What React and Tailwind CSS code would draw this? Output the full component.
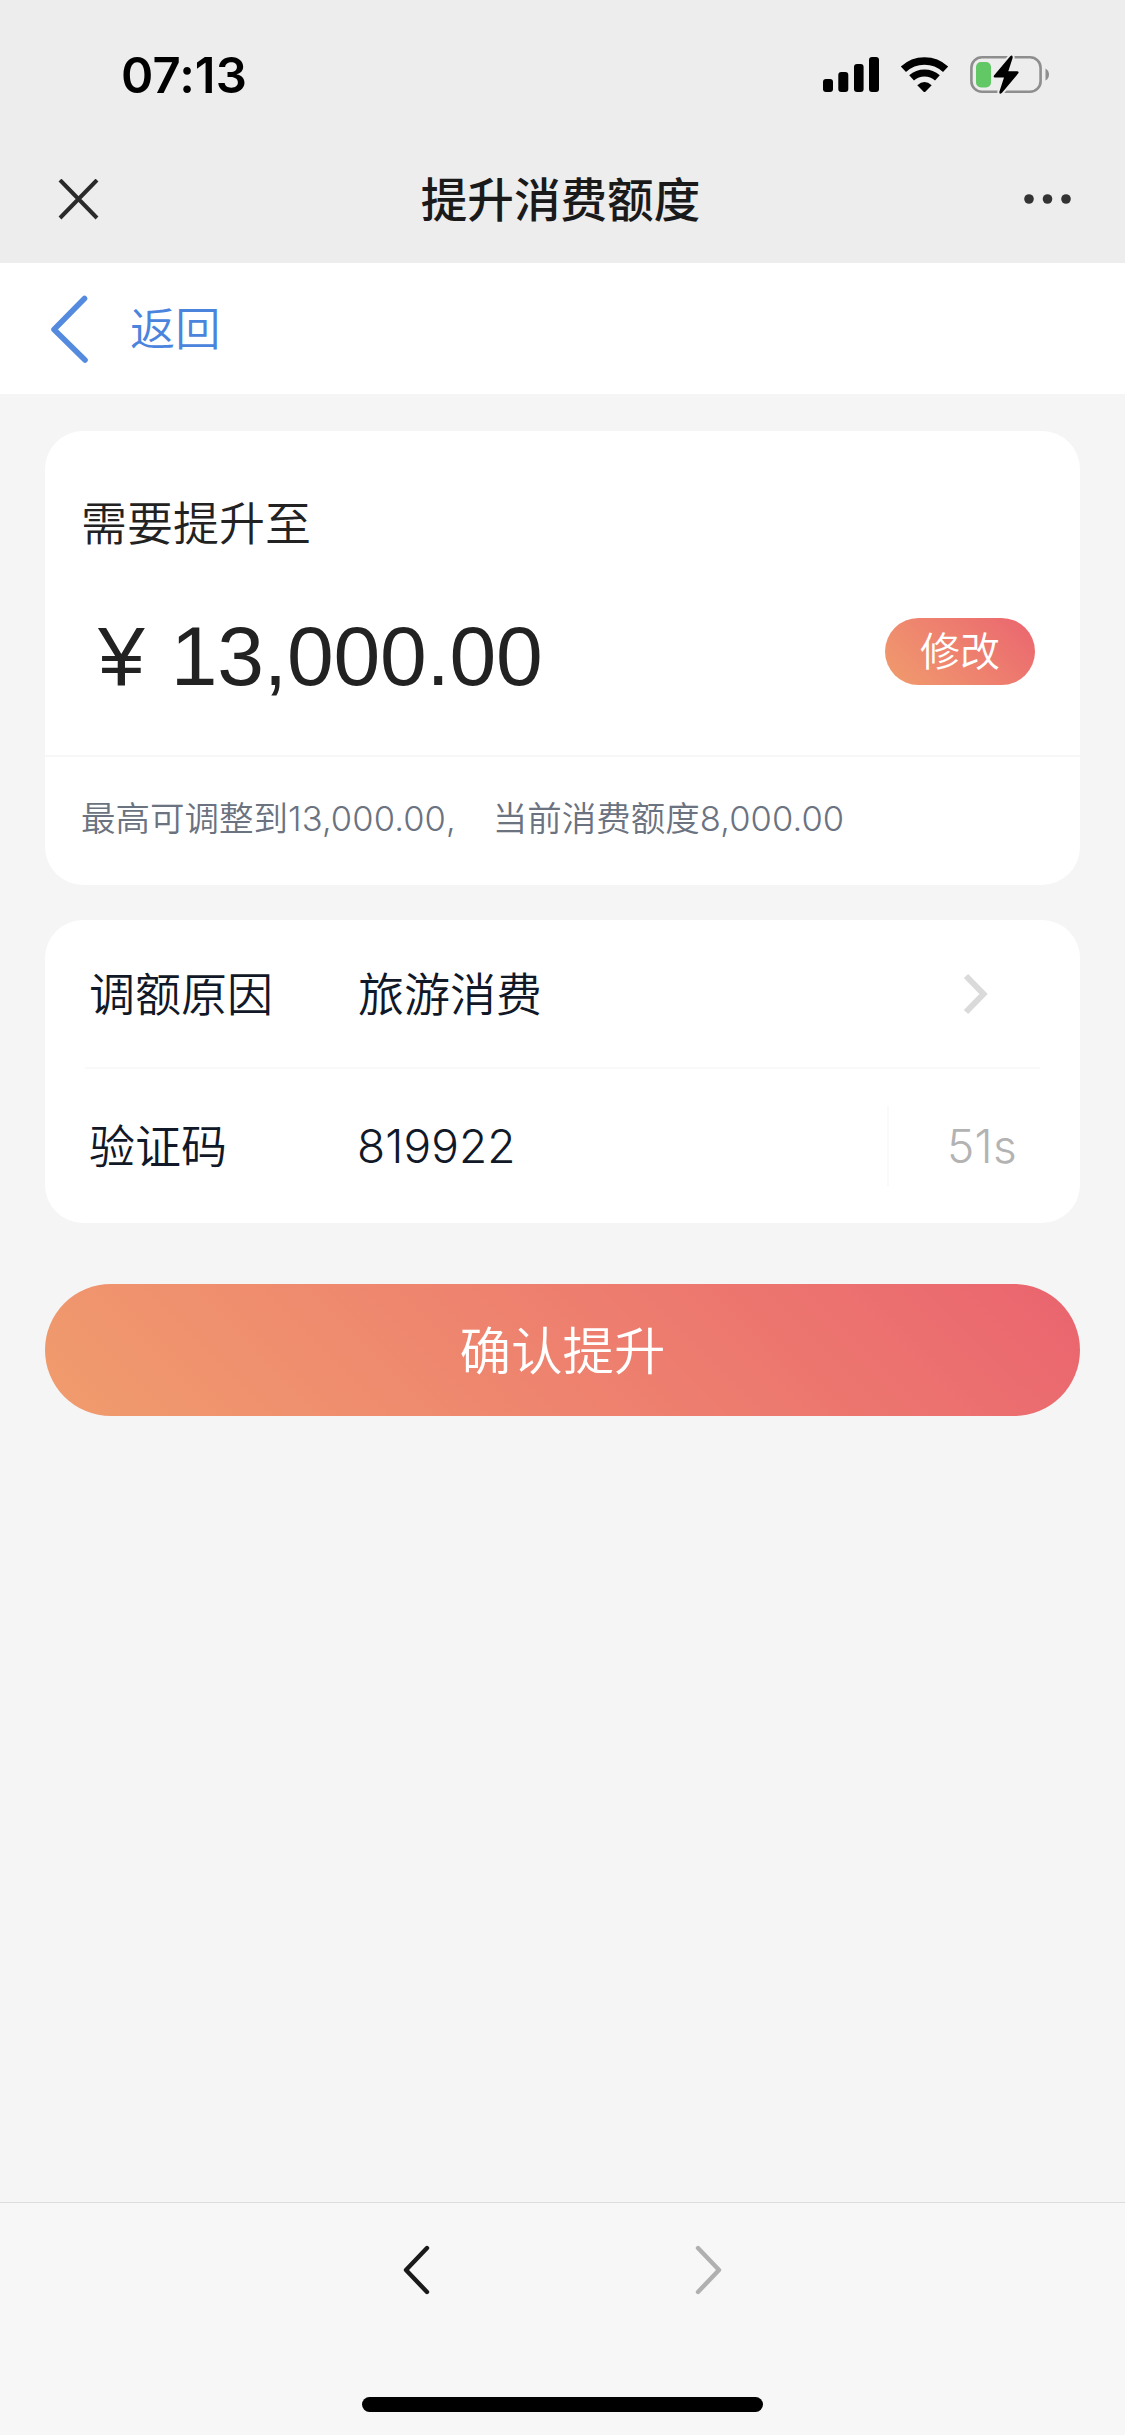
import React from "react";

// shared text styles: Latin digits from Inter, Chinese from Noto CJK
const cjk = "font-['Noto_Sans_CJK_SC',sans-serif]";
const mixed = "font-['Inter','Noto_Sans_CJK_SC',sans-serif]";

function StatusBar() {
  return (
    <div className="flex h-[136px] items-start justify-between pt-[48px] pl-[121px] pr-[74px]">
      <span className="font-['Inter',sans-serif] text-[49px] leading-[55px] font-semibold tracking-[0.1px] text-black">
        07:13
      </span>
      <div className="mt-[6px] flex gap-[20px]">
        {/* Signal */}
        <svg className="h-[41px] w-[58px]" viewBox="0 0 58 41">
          <rect x="1" y="25" width="10" height="13" rx="3" />
          <rect x="16.3" y="18" width="10" height="20" rx="3" />
          <rect x="32" y="10" width="9.6" height="28" rx="3" />
          <rect x="47" y="3" width="10" height="35" rx="3" />
        </svg>
        {/* Wifi */}
        <svg className="h-[41px] w-[50px]" viewBox="0 0 50 41">
          <path d="M3.4 15.3A31 31 0 0 1 45.6 15.3" fill="none" stroke="#000" strokeWidth="7.6" />
          <path d="M11.6 23.9A19.5 19.5 0 0 1 37.4 23.9" fill="none" stroke="#000" strokeWidth="7.2" />
          <path d="M17.3 31.2Q24.5 24.8 31.7 31.2L25.6 37.4Q24.5 38.4 23.4 37.4Z" />
        </svg>
        {/* Battery, charging */}
        <svg className="h-[41px] w-[81px]" viewBox="0 0 81 41">
          <rect x="1.4" y="3.3" width="69.2" height="34.4" rx="10.5" fill="none" stroke="#8e8e8e" strokeWidth="2.6" />
          <path d="M75.5 14.5Q79 16.5 79 20.5T75.5 26.5Z" fill="#8e8e8e" />
          <rect x="6" y="8" width="15" height="25.5" rx="5" fill="#62c765" />
          <path
            d="M40 2.5L24 21.5Q23 23.4 25 23.4H34L29.3 38Q29.3 41 32 38.7L48.3 19.3Q49.3 17.2 47 17.2H38.3L42.7 3.7Q42.7 0.2 40 2.5Z"
            stroke="#ededed"
            strokeWidth="4"
            paintOrder="stroke"
          />
        </svg>
      </div>
    </div>
  );
}

function TitleBar() {
  return (
    <div className="flex h-[126px] items-center justify-between pl-[58px] pr-[54px]">
      <svg className="h-[41px] w-[41px]" viewBox="0 0 41 41" fill="none" stroke="#2a2a2a" strokeWidth="4">
        <path d="M2 1L39 39M39 1L2 39" />
      </svg>
      <h1 className={`${cjk} pr-[2px] pb-[4px] text-[46.6px] font-medium text-[#1a1a1a]`}>提升消费额度</h1>
      <svg className="h-[10px] w-[47px]" viewBox="0 0 47 10" fill="#333">
        <circle cx="5" cy="5" r="4.8" />
        <circle cx="23.5" cy="5" r="4.8" />
        <circle cx="42" cy="5" r="4.8" />
      </svg>
    </div>
  );
}

export default function App() {
  return (
    <div className={`${mixed} flex h-[2435px] w-[1125px] flex-col bg-[#f5f5f5]`}>
      <header className="h-[263px] bg-[#ededed]">
        <StatusBar />
        <TitleBar />
      </header>

      {/* Back */}
      <div className="flex h-[131px] items-center bg-white pl-[50px]">
        <svg className="h-[68px] w-[40px]" viewBox="0 0 40 68" fill="none" stroke="#548bdf" strokeWidth="5.6" strokeLinecap="round" strokeLinejoin="round">
          <path d="M34.5 3.5L4 34.5L35 65" />
        </svg>
        <span className={`${cjk} ml-[40px] pb-[4px] text-[45.2px] font-[350] text-[#4a84dd]`}>返回</span>
      </div>

      <main className="flex-1 px-[45px] pt-[37px]">
        {/* Amount */}
        <section className="h-[454px] rounded-[38px] bg-white">
          <div className="h-[324px] pt-[55px] pl-[36px] pr-[45px]">
            <h2 className={`${cjk} text-[46px] leading-[68px] font-[350] text-[#222]`}>需要提升至</h2>
            <div className="mt-[57px] flex h-[90px] items-center justify-between">
              <div className="flex items-center pl-[17px] font-['Liberation_Sans',sans-serif] text-[84px] leading-[90px] text-[#222]">
                <span>¥</span>
                <span className="ml-[26px] tracking-[-0.2px]">13,000.00</span>
              </div>
              <button className={`${cjk} mb-[9px] h-[67px] w-[150px] rounded-full bg-linear-45 from-[#f09c6d] to-[#ea646f] pb-[6px] text-[40px] leading-[60px] font-[350] text-white`}>
                修改
              </button>
            </div>
          </div>
          <div className="flex h-[130px] items-center border-t-2 border-[#f7f7f7] pb-[4px] pl-[36px] text-[34.5px] font-[350] text-[#6b7280]">
            <span>
              最高可调整到<span className="tracking-[0.1px]">13,000.00</span>
            </span>
            <span>,</span>
            <span className="ml-[37px]">
              当前消费额度<span className="tracking-[0.1px]">8,000.00</span>
            </span>
          </div>
        </section>

        {/* Form */}
        <section className="mt-[35px] h-[303px] rounded-[38px] bg-white px-[40px] text-[46px] font-[350] text-[#111827]">
          <div className="flex h-[149px] items-center border-b-2 border-[#f9f9f9] pl-[4px]">
            <span className="w-[269px] pt-[2px]">调额原因</span>
            <span className="flex-1 pt-[2px]">旅游消费</span>
            <svg className="mr-[51px] h-[42px] w-[26px]" viewBox="0 0 26 42" fill="none" stroke="#dadada" strokeWidth="6">
              <path d="M3 3L20.5 21L3 39" />
            </svg>
          </div>
          <div className="flex h-[154px] items-center pl-[4px]">
            <span className="w-[268px] pt-[1px]">验证码</span>
            <span className="flex-1 tracking-[0.1px]">819922</span>
            <div className="flex h-[80px] w-[153px] items-center border-l-2 border-[#fafafa] pl-[58px] font-light tracking-[0.3px] text-[#b3b3b3]">
              51s
            </div>
          </div>
        </section>

        <button className={`${cjk} mt-[61px] h-[132px] w-full rounded-full bg-linear-45 from-[#f09c6d] to-[#ea646f] pb-[4px] text-[51.5px] font-[350] text-white`}>
          确认提升
        </button>
      </main>

      {/* Browser nav */}
      <footer className="flex h-[233px] flex-col items-center justify-between border-t border-[#dcdcdc] bg-[#f7f7f7] pt-[42px] pb-[23px]">
        <div className="flex w-[321px] justify-between">
          <svg className="h-[50px] w-[28px]" viewBox="0 0 28 50" fill="none" stroke="#1a1a1a" strokeWidth="4.4" strokeLinecap="round" strokeLinejoin="round">
            <path d="M25 3L4 25L25 47" />
          </svg>
          <svg className="h-[50px] w-[28px]" viewBox="0 0 28 50" fill="none" stroke="#b0b0b0" strokeWidth="4.4" strokeLinecap="round" strokeLinejoin="round">
            <path d="M3 3L24 25L3 47" />
          </svg>
        </div>
        <div className="h-[15px] w-[401px] rounded-full bg-black" />
      </footer>
    </div>
  );
}
